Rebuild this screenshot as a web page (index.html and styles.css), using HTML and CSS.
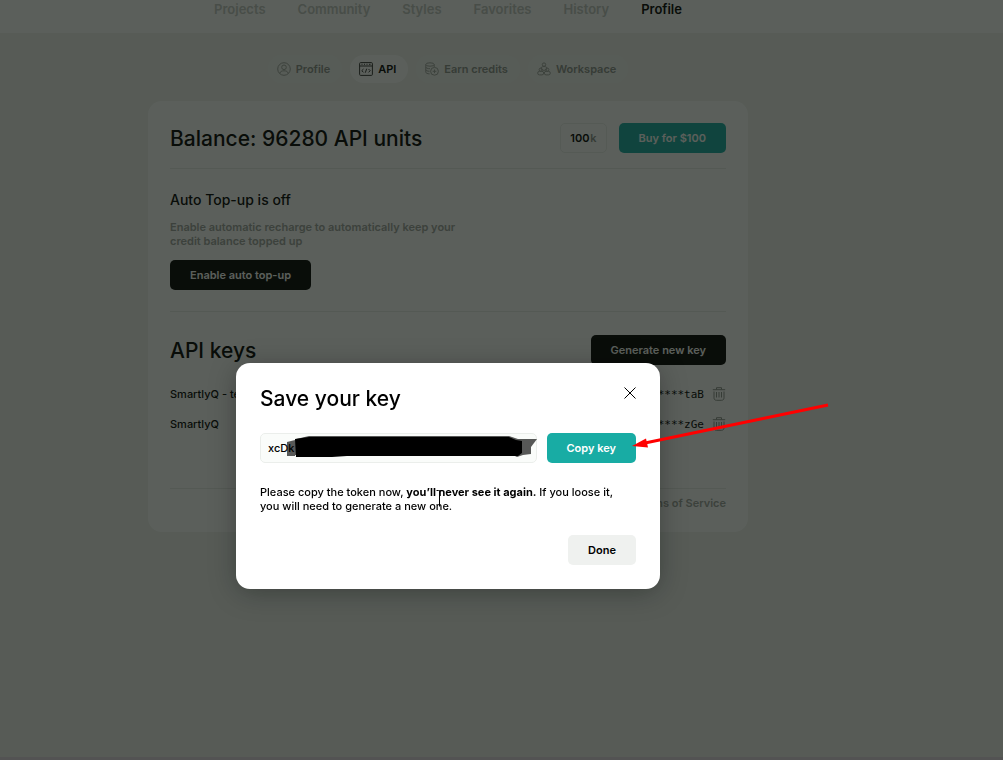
FILE: index.html
```html
<!DOCTYPE html>
<html lang="en">
<head>
    <meta charset="UTF-8">
    <title>API keys</title>
    <link rel="stylesheet" href="styles.css">
</head>
<body>
<header class="header">
    <nav class="nav">
        <a href="#">Projects</a>
        <a href="#">Community</a>
        <a href="#">Styles</a>
        <a href="#">Favorites</a>
        <a href="#">History</a>
        <a href="#" class="active">Profile</a>
    </nav>
</header>
<main class="main">
    <nav class="tabs">
        <a href="#">
            <svg viewBox="0 0 14 14"><circle cx="7" cy="7" r="6.3"/><circle cx="7" cy="5.3" r="2.3"/><path d="M2.8 11.4C3.2 9.6 4.6 8.8 7 8.8s3.800.8 4.2 2.600"/></svg>
            Profile
        </a>
        <a href="#" class="active">
            <svg viewBox="0 0 14 14"><rect x=".6" y=".6" width="12.8" height="12.8" rx="1"/><path d="M.6 4h12.800M2.500 2.300h1M5 2.300h1M7.500 2.300h1M10 2.300h1.500M4.500 7L2.800 8.700l1.700 1.700M9.500 7l1.700 1.700-1.700 1.700M7.700 6.700l-1.400 4"/></svg>
            API
        </a>
        <a href="#">
            <svg viewBox="0 0 14 14"><ellipse cx="5" cy="2.5" rx="4.2" ry="1.7"/><path d="M.8 2.500v7.700c0 .9 1.600 1.600 3.800 1.700M9.200 2.500V5M.8 5.100c0 .9 1.900 1.600 4.200 1.600M.8 7.700c0 .9 1.600 1.500 3.700 1.600"/><circle cx="9.5" cy="9.3" r="3.9"/><path d="M9.500 7.500v3.600M7.700 9.300h3.600"/></svg>
            Earn credits
        </a>
        <a href="#">
            <svg viewBox="0 0 14 14"><circle cx="7" cy="2.6" r="1.7"/><path d="M4.200 7.200C3.500 5.500 5 4.500 7 4.500s3.500 1 2.800 2.700L7 8.500z"/><circle cx="3.7" cy="7.7" r="1.6"/><circle cx="10.3" cy="7.7" r="1.6"/><rect x=".7" y="9.3" width="6" height="3.6" rx="1.8"/><rect x="7.3" y="9.3" width="6" height="3.6" rx="1.8"/></svg>
            Workspace
        </a>
    </nav>
    <div class="card">
        <section class="row balance">
            <h1>Balance: 96280 API units</h1>
            <div class="buy">
                <label class="amount"><input type="text" value="100" aria-label="Units"><span>k</span></label>
                <button class="btn teal">Buy for $100</button>
            </div>
        </section>
        <section class="topup">
            <h3>Auto Top-up is off</h3>
            <p>Enable automatic recharge to automatically keep your credit balance topped up</p>
            <button class="btn dark">Enable auto top-up</button>
        </section>
        <section class="keys">
            <div class="row">
                <h1>API keys</h1>
                <button class="btn dark">Generate new key</button>
            </div>
            <ul>
                <li>
                    <span>SmartlyQ - test</span>
                    <code>xcD*****taB</code>
                    <button class="trash" aria-label="Delete key">
                        <svg viewBox="0 0 14 14"><path d="M.8 2.700h12.400M4.500 2.500V.7h5v1.800M2 4.500v6.300c0 1.600.9 2.500 2.500 2.500h5c1.600 0 2.500-.9 2.500-2.500V4.500M4.500 5v5.500M7 5v5.500M9.500 5v5.500"/></svg>
                    </button>
                </li>
                <li>
                    <span>SmartlyQ</span>
                    <code>xcD*****zGe</code>
                    <button class="trash" aria-label="Delete key">
                        <svg viewBox="0 0 14 14"><path d="M.8 2.700h12.400M4.500 2.500V.7h5v1.800M2 4.500v6.300c0 1.600.9 2.500 2.500 2.500h5c1.600 0 2.500-.9 2.500-2.500V4.500M4.500 5v5.500M7 5v5.500M9.500 5v5.500"/></svg>
                    </button>
                </li>
            </ul>
        </section>
        <footer class="terms"><a href="#">Terms of Service</a></footer>
    </div>
</main>

<div class="overlay">
    <div class="modal" role="dialog" aria-labelledby="title">
        <div class="row modal-head">
            <h2 id="title">Save your key</h2>
            <button class="close" aria-label="Close">
                <svg viewBox="0 0 12 12"><path d="M.5.5l11 11M11.500.5l-11 11"/></svg>
            </button>
        </div>
        <div class="copy">
            <div class="field">
                <input type="text" value="xcDk" aria-label="Key" readonly>
                <!-- brush over the key -->
                <svg class="brush" viewBox="0 0 250 22">
                    <path fill-opacity=".65" d="M0 6l8-2 1-1 13-3h200l9 3h19l-6 8v7l-8 1-6 2-4-2H8v1H0z"/>
                    <path d="M8 3l14-2h200l7 3 6 1v12l-4 3H60l-15 1H9z"/>
                </svg>
            </div>
            <div class="copy-key">
                <button class="btn teal">Copy key</button>
                <svg class="arrow" viewBox="0 0 198 46">
                    <path d="M13 40L196 2" stroke="#f00" stroke-width="3"/>
                    <path d="M0 43L14 35.500 16 44.500z" fill="#f00" stroke="none"/>
                </svg>
            </div>
        </div>
        <p>Please copy the token now, <b>you’ll never see it again.</b> If you loose it, you will need to generate a new one.
            <svg class="cursor" viewBox="0 0 7 18"><path d="M.5 1.500h2l1 1 1-1h2M3.500 2.500v15"/></svg>
        </p>
        <button class="btn light">Done</button>
    </div>
</div>
</body>
</html>
```
FILE: styles.css
```css
*{
    margin: 0;
    padding: 0;
    box-sizing: border-box;
}
body{
    min-height: 100vh;
    font-family: Inter, "Liberation Sans", sans-serif;
    font-size: 11px;
    font-weight: 500;
    color: #000;
    background: #f1f3f0;
    border-bottom: 3px solid #e6d8e6;
}
a{
    text-decoration: none;
    color: inherit;
}
button,input{
    font: inherit;
    color: inherit;
    border: none;
}
svg{
    fill: none;
    stroke: currentColor;
    flex: none;
}
h1,h2{
    font-size: 21px;
    font-weight: 500;
    line-height: 32px;
}
h3{
    font-size: 14px;
    font-weight: 500;
    line-height: 20px;
}
.row{
    display: flex;
    justify-content: space-between;
}
/* top menu */
.header{
    height: 33px;
    padding-right: 107px;
    background: #fff;
}
.nav{
    display: flex;
    justify-content: center;
    gap: 32px;
    font-size: 13px;
    font-weight: 600;
    line-height: 18px;
    color: #c4c8c4;
}
.nav .active{
    color: #000;
}
.main{
    display: flex;
    flex-direction: column;
    align-items: center;
    gap: 18px;
    padding: 22px 107px 0 0;
}
.tabs{
    display: flex;
    gap: 8px;
    color: #8c918c;
}
.tabs a{
    display: flex;
    align-items: center;
    gap: 5px;
    height: 28px;
    padding: 0 12px 0 9px;
    border-radius: 14px;
    font-weight: 600;
    background: #f3f5f2;
}
.tabs .active{
    color: #000;
    background: #fff;
}
.tabs svg{
    width: 14px;
    height: 14px;
    opacity: .8;
}
/* card */
.card{
    width: 100%;
    max-width: 600px;
    padding: 22px;
    border-radius: 14px;
    background: #fff;
}
.balance{
    padding-bottom: 13px;
    border-bottom: 1px solid #e8ebe8;
}
.buy{
    display: flex;
    gap: 12px;
}
.amount{
    display: flex;
    align-items: center;
    height: 30px;
    padding: 0 9px;
    border: 1px solid #ecefec;
    border-radius: 5px;
    color: #8c918c;
    font-weight: 600;
}
.amount input{
    width: 20px;
    color: #000;
    background: none;
}
.btn{
    height: 30px;
    padding: 0 20px;
    border-radius: 5px;
    font-weight: 600;
    color: #fff;
}
.teal{
    background: #18aca4;
}
.dark{
    background: #000;
}
.light{
    color: #000;
    background: #eff1ef;
}
.topup{
    padding: 21px 0;
    border-bottom: 1px solid #e8ebe8;
}
.topup p{
    max-width: 310px;
    margin: 10px 0 12px;
    font-weight: 600;
    line-height: 14px;
    color: #9ea39e;
}
.keys{
    padding: 23px 0 49px;
    border-bottom: 1px solid #e8ebe8;
}
.keys ul{
    margin-top: 12px;
    list-style: none;
}
.keys li{
    display: flex;
    align-items: center;
    height: 30px;
}
.keys code{
    margin: 0 8px 0 auto;
    font-family: "DejaVu Sans Mono", monospace;
    font-size: 11px;
}
.trash{
    width: 14px;
    height: 14px;
    background: none;
    color: #8c918c;
}
.terms{
    padding-top: 7px;
    font-weight: 600;
    line-height: 14px;
    text-align: right;
    color: #9ea39e;
}
/* dialog */
.overlay{
    position: fixed;
    inset: 0;
    display: flex;
    align-items: center;
    justify-content: center;
    padding: 192px 107px 0 0;
    background: rgba(14, 19, 14, .68);
}
.modal{
    display: flex;
    flex-direction: column;
    width: 424px;
    padding: 20px 24px 24px;
    border-radius: 14px;
    background: #fff;
    box-shadow: 0 4px 28px rgba(0, 0, 0, .3);
}
.modal-head{
    align-items: flex-start;
}
.close{
    width: 12px;
    height: 12px;
    margin-top: 4px;
    background: none;
}
.close svg,.trash svg{
    display: block;
}
.copy{
    display: flex;
    gap: 10px;
    margin-top: 18px;
}
.field{
    position: relative;
    flex: 1;
}
.field input{
    width: 100%;
    height: 30px;
    padding: 0 7px;
    border: 1px solid #ebeeeb;
    border-radius: 5px;
    background: #fafcfa;
}
.brush{
    position: absolute;
    top: 3px;
    left: 27px;
    width: 250px;
    fill: #000;
    stroke: none;
}
.copy-key{
    position: relative;
}
.arrow{
    position: absolute;
    top: -30px;
    left: 85px;
    width: 198px;
}
.modal p{
    position: relative;
    max-width: 368px;
    margin: 22px 0;
    line-height: 14px;
}
.cursor{
    position: absolute;
    top: 4px;
    left: 176px;
    width: 7px;
    height: 18px;
}
.light{
    align-self: flex-end;
}
```
